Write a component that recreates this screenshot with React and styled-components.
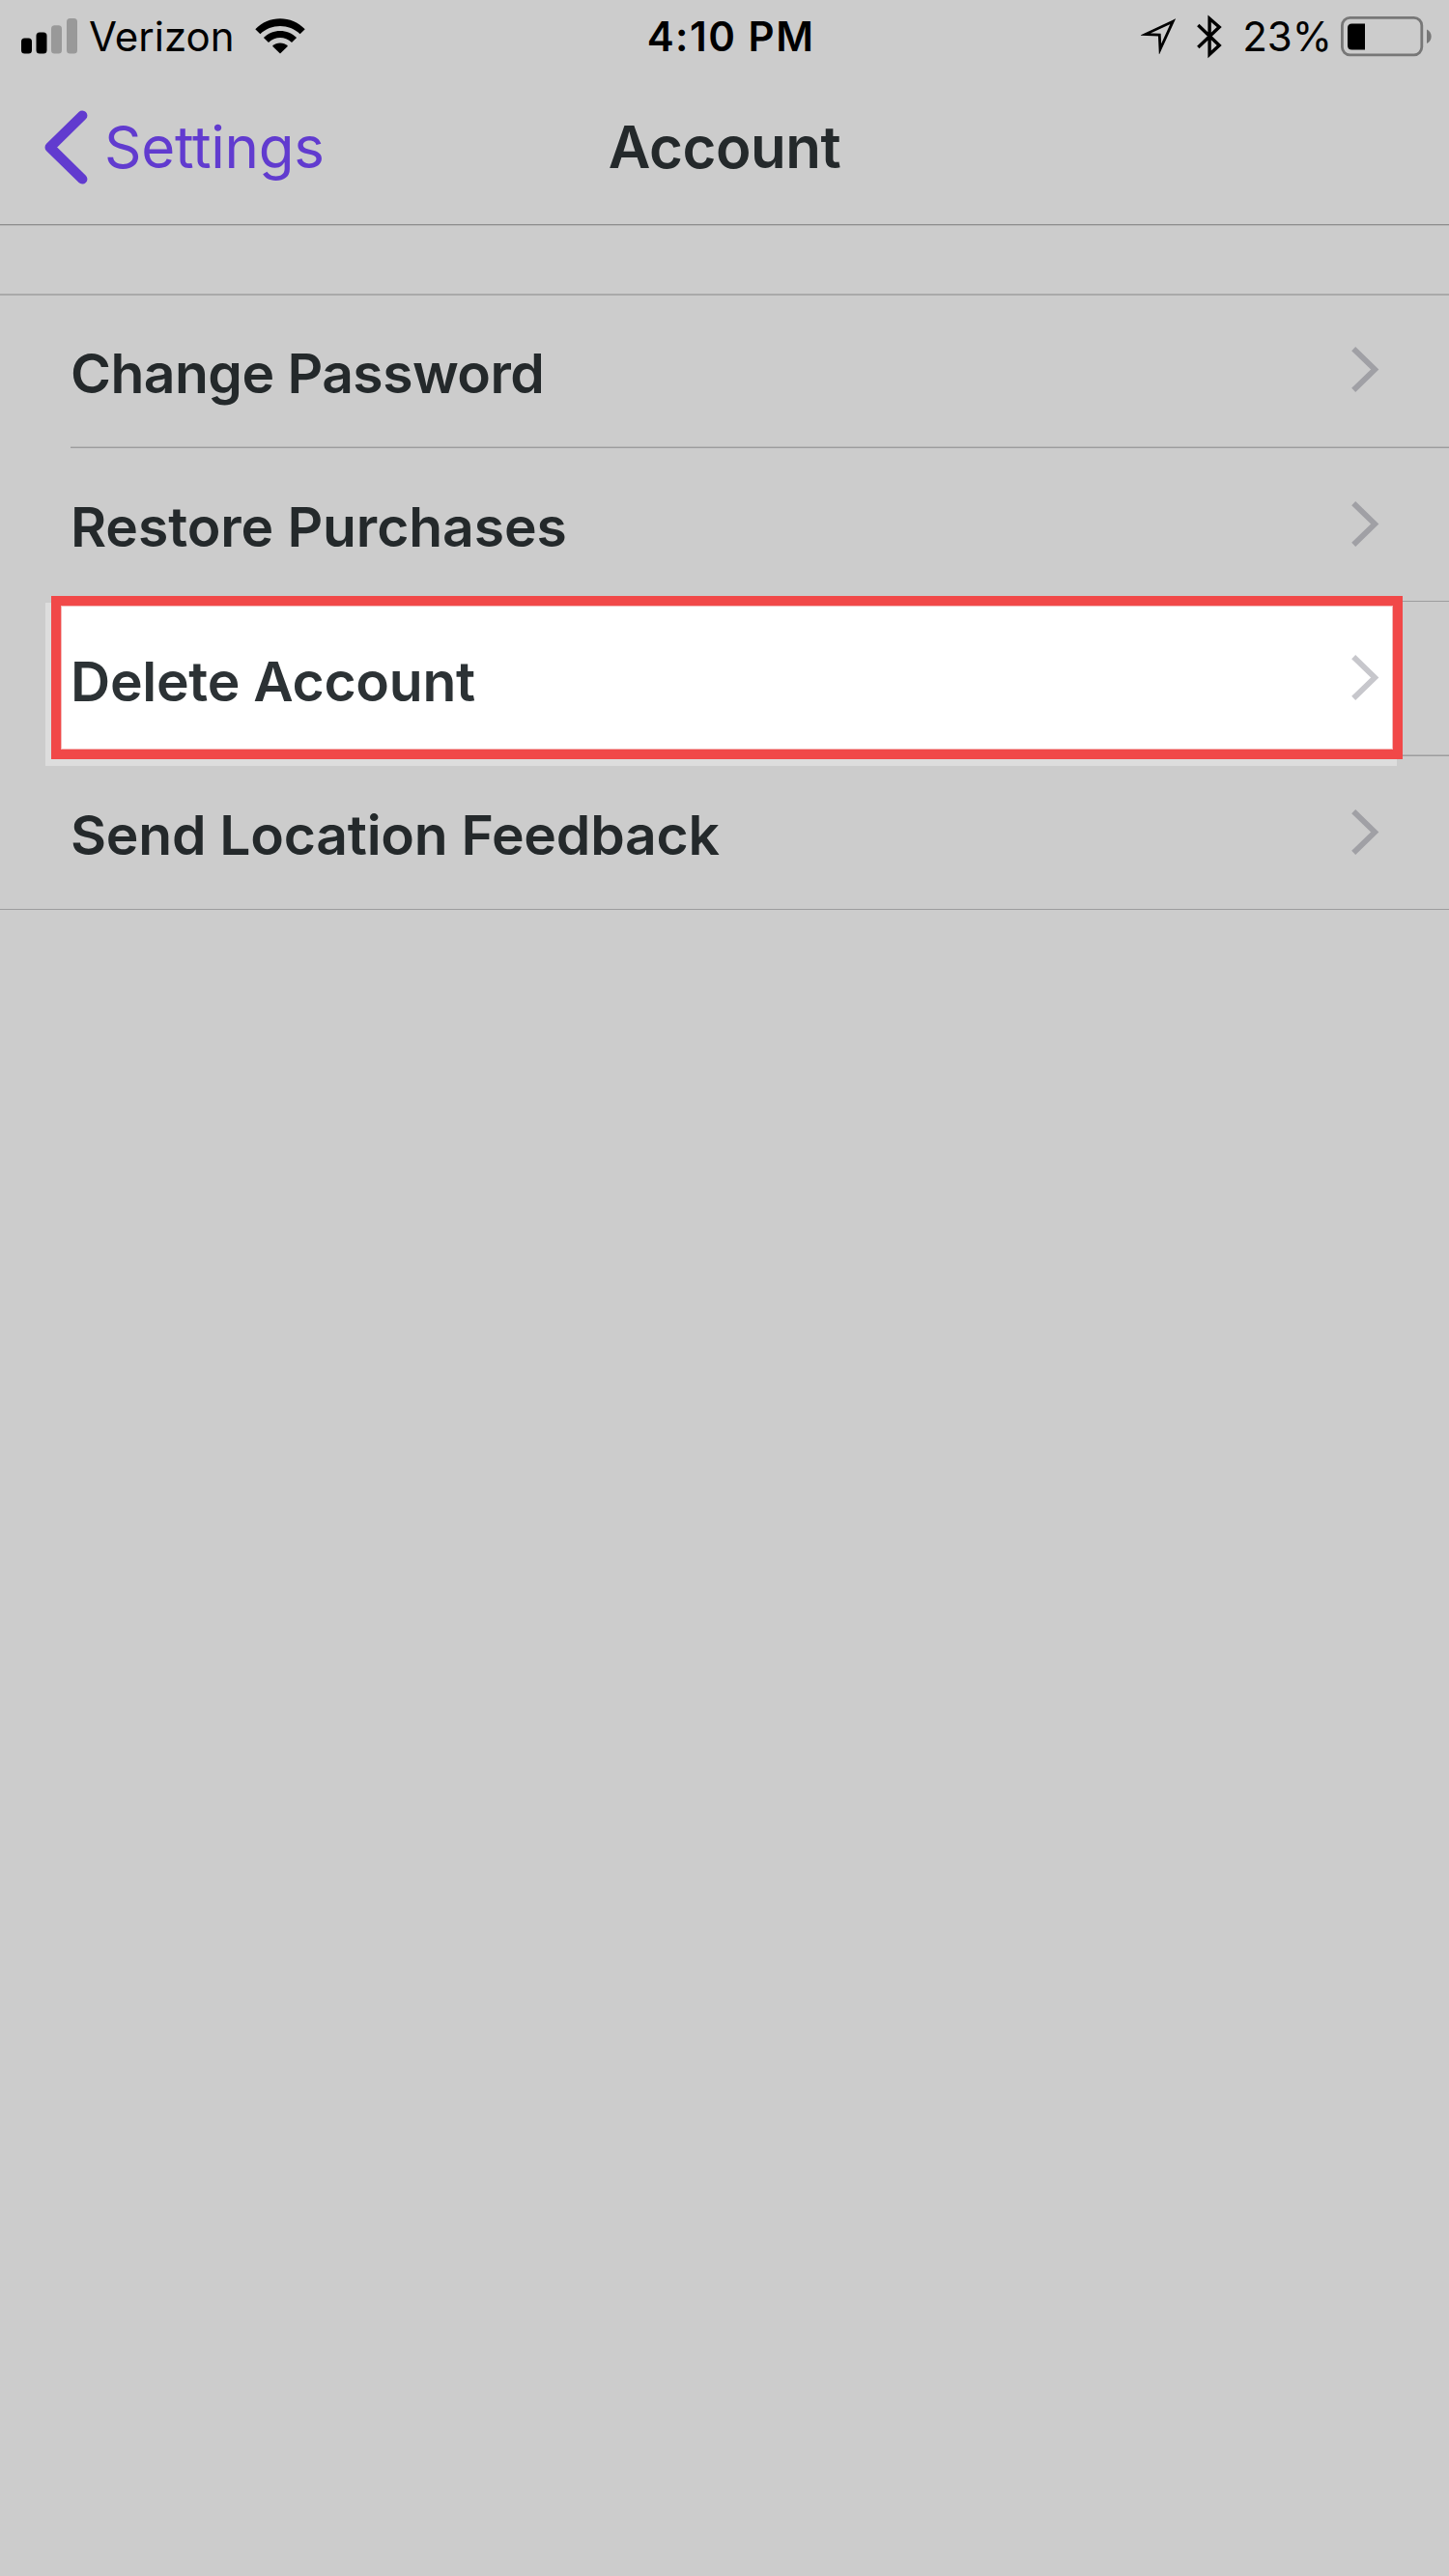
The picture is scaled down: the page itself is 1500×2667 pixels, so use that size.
import React from 'react';
import styled, { createGlobalStyle } from 'styled-components';

const GlobalStyle = createGlobalStyle`
  * { box-sizing: border-box; }
  body {
    margin: 0;
    background: #cccccc;
    font-family: Inter, "Liberation Sans", sans-serif;
  }
`;

const Screen = styled.main`
  width: 1500px;
  height: 2667px;
  background: #cccccc;
  color: #24292b;
  overflow: hidden;
`;

const StatusBar = styled.div`
  display: grid;
  grid-template-columns: 1fr auto 1fr;
  align-items: center;
  height: 75px;
  padding: 0 18px 0 22px;
  color: #000;
`;

const StatusGroup = styled.div`
  display: flex;
  align-items: center;
  justify-content: ${(p) => (p.$end ? 'flex-end' : 'flex-start')};
  svg { display: block; flex: none; }
`;

const StatusText = styled.span`
  font-size: 42px;
  line-height: 50px;
  font-weight: ${(p) => p.$weight || 400};
  letter-spacing: ${(p) => p.$tracking || 0}px;
  margin: ${(p) => p.$margin || 0};
  white-space: nowrap;
`;

const NavBar = styled.header`
  display: grid;
  grid-template-columns: 1fr auto 1fr;
  align-items: center;
  height: 158px;
  padding: 0 46px 2px;
  border-bottom: 1px solid #8e8e8e;
  box-shadow: 0 1px 0 #b8b8b8;
`;

const BackButton = styled.button`
  display: flex;
  align-items: center;
  gap: 17px;
  padding: 0;
  border: 0;
  background: none;
  color: #613bcf;
  font: 400 60px/72px Inter, "Liberation Sans", sans-serif;
  letter-spacing: ${(p) => p.$tracking}px;
  svg { display: block; flex: none; }
`;

const BackLabel = styled.span`
  padding-bottom: 2px;
`;

const Title = styled.h1`
  margin: 0;
  padding-bottom: 2px;
  font-size: 60px;
  line-height: 72px;
  font-weight: 600;
  letter-spacing: ${(p) => p.$tracking}px;
`;

const List = styled.ul`
  list-style: none;
  margin: 71px 0 0;
  padding: 0;
  border-top: 2px solid #a9a9a9;
`;

const Row = styled.li`
  position: relative;
  display: flex;
  height: ${(p) => p.$height}px;
  padding-left: ${(p) => (p.$last ? 0 : 73)}px;
`;

const RowBody = styled.div`
  flex: 1;
  display: flex;
  align-items: center;
  justify-content: space-between;
  padding: 0 72px ${(p) => (p.$first ? 4 : 2)}px ${(p) => (p.$last ? 73 : 0)}px;
  border-bottom: 1px solid #9d9d9e;
  box-shadow: ${(p) => (p.$first ? 'inset 0 -1px 0 #b8b8b8' : 'none')};
  svg { display: block; flex: none; }
`;

const Label = styled.span`
  padding-top: 8px;
  font-size: 57px;
  line-height: 68px;
  font-weight: 600;
  letter-spacing: ${(p) => p.$tracking}px;
  white-space: nowrap;
`;

const Highlight = styled.div`
  position: absolute;
  z-index: 1;
  left: 53px;
  right: 48px;
  top: -6px;
  height: 169px;
  border: 10px solid #f14848;
  background: #fff;
  box-shadow: inset 0 0 0 1px #f3b9b9, -6px 7px 0 #dddddd;
`;

const HighlightedBody = styled(RowBody)`
  position: relative;
  z-index: 2;
  border-color: transparent;
  color: #2c3235;
`;

const HighlightedRow = styled(Row)`
  &::after {
    content: '';
    position: absolute;
    right: 0;
    bottom: 0;
    width: 48px;
    height: 2px;
    background: linear-gradient(#b4b4b4 50%, #9d9d9e 50%);
  }
`;

const SignalIcon = () => (
  <svg width="58" height="37" viewBox="0 0 58 37">
    <rect x="0" y="20.5" width="11" height="16" rx="3.5" />
    <rect x="15.5" y="14.5" width="11" height="22" rx="3.5" />
    <rect x="31" y="7.2" width="11" height="29.3" rx="3.5" fill="#999" />
    <rect x="47" y="0" width="11" height="36.5" rx="3.5" fill="#999" />
  </svg>
);

const WifiIcon = () => (
  <svg width="52" height="37" viewBox="0 0 52 37">
    <path d="M.3 11.2C14-3.4 38-3.4 51.7 11.2L46.6 16.2C35.5 5.2 16.5 5.2 5.4 16.2Z" />
    <path d="M8.9 20C18 10.5 34 10.5 43.1 20L38 25C31 18.4 21 18.4 14 25Z" />
    <path d="M18 28.8C22.5 24.4 29.5 24.4 34 28.8L26 36.6Z" />
  </svg>
);

const LocationIcon = () => (
  <svg width="36" height="37" viewBox="0 0 36 37">
    <path d="M33.2 3.2L4.5 16.6L19.3 17.2L20 32Z" fill="none" stroke="#000" strokeWidth="2.8" strokeMiterlimit="8" />
  </svg>
);

const BluetoothIcon = () => (
  <svg width="26" height="46" viewBox="0 0 26 46">
    <path d="M1.3 11L23.2 32L13.1 41.3V4.3L23.2 13L1.3 34" fill="none" stroke="#000" strokeWidth="3.4" strokeMiterlimit="8" />
  </svg>
);

const BatteryIcon = () => (
  <svg width="94" height="42" viewBox="0 0 94 42">
    <rect x="1.4" y="1.4" width="82.4" height="38.4" rx="8" fill="none" stroke="#777" strokeWidth="2.8" />
    <path d="M11.5 7.5H25V34.5H11.5Q7 34.5 7 30V12Q7 7.5 11.5 7.5Z" />
    <path d="M89 13.5C95.2 16 95.2 25.5 89 28Z" fill="#777" />
  </svg>
);

const BackIcon = () => (
  <svg width="45" height="77" viewBox="0 0 45 77">
    <path d="M39.2 5.6L5.7 38.5L39.2 71.4" fill="none" stroke="currentColor" strokeWidth="10.4" strokeLinecap="round" strokeLinejoin="round" />
  </svg>
);

const Chevron = ({ color }) => (
  <svg width="29" height="47" viewBox="0 0 29 47">
    <path d="M2.2 2.2L24.2 23.5L2.2 44.8" fill="none" stroke={color} strokeWidth="5.8" />
  </svg>
);

const items = [
  { label: 'Change Password', tracking: -0.54, height: 158 },
  { label: 'Restore Purchases', tracking: -0.1, height: 159 },
  { label: 'Delete Account', tracking: -0.28, height: 160, highlighted: true },
  { label: 'Send Location Feedback', tracking: -0.25, height: 159 },
];

export default function App() {
  return (
    <Screen>
      <GlobalStyle />
      <StatusBar>
        <StatusGroup>
          <SignalIcon />
          <StatusText $margin="0 21px 0 12px">Verizon</StatusText>
          <WifiIcon />
        </StatusGroup>
        <StatusText $weight={600} $tracking={1.5} $margin="0 0 0 9px">4:10 PM</StatusText>
        <StatusGroup $end>
          <LocationIcon />
          <StatusText $margin="0 0 0 22px" />
          <BluetoothIcon />
          <StatusText $margin="0 9px 0 21px">23%</StatusText>
          <BatteryIcon />
        </StatusGroup>
      </StatusBar>
      <NavBar>
        <BackButton $tracking={-0.25}>
          <BackIcon />
          <BackLabel>Settings</BackLabel>
        </BackButton>
        <Title $tracking={-0.5}>Account</Title>
      </NavBar>
      <List>
        {items.map((item, i) => {
          const last = i === items.length - 1;
          const RowBox = item.highlighted ? HighlightedRow : Row;
          const Body = item.highlighted ? HighlightedBody : RowBody;
          return (
            <RowBox key={item.label} $height={item.height} $last={last}>
              {item.highlighted && <Highlight />}
              <Body $first={i === 0} $last={last}>
                <Label $tracking={item.tracking}>{item.label}</Label>
                <Chevron color={item.highlighted ? '#c7c7cc' : '#a0a0a5'} />
              </Body>
            </RowBox>
          );
        })}
      </List>
    </Screen>
  );
}
